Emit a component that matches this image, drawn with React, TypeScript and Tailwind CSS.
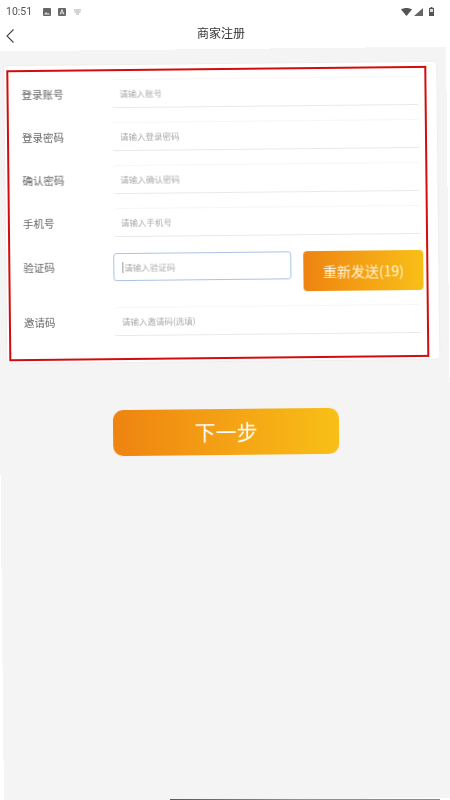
const FONT = "font-['Noto_Sans_CJK_SC','Noto_Sans',sans-serif]";

const FIELDS = [
  { label: '登录账号', hint: '请输入账号' },
  { label: '登录密码', hint: '请输入登录密码' },
  { label: '确认密码', hint: '请输入确认密码' },
  { label: '手机号', hint: '请输入手机号' },
];

function StatusBar() {
  return (
    <div className="flex h-[20px] items-center justify-between pl-[6px] pr-[16px] pt-[3px]">
      <div className="flex items-center gap-[11px]">
        <span className="font-['Roboto',sans-serif] text-[10.500px] text-[#555]">10:51</span>
        <div className="flex items-center gap-[7px]">
          {/* image notification */}
          <svg width="8" height="8" viewBox="0 0 8 8">
            <rect width="8" height="8" rx="1" fill="#666" />
            <path d="M1 6.500 3 4l1.500 1.500L5.500 5 7 6.500z" fill="#ddd" />
          </svg>
          <svg width="8" height="8" viewBox="0 0 8 8">
            <rect width="8" height="8" rx="1" fill="#666" />
            <path d="M2 6.500 4 1.500l2 5M3 5h2" fill="none" stroke="#eee" strokeWidth="0.9" />
          </svg>
          <svg width="9" height="6" viewBox="0 0 9 6">
            <path d="M1 1h7M1.500 3h6M3 5h3" stroke="#aaa" strokeWidth="1.100" />
          </svg>
        </div>
      </div>
      <div className="flex items-center gap-[2px]">
        <svg width="11" height="8" viewBox="0 0 11 8">
          <path d="M0 1.500C3-.5 8-.5 11 1.500L5.500 8z" fill="#555" />
        </svg>
        <svg width="9" height="8" viewBox="0 0 9 8">
          <path d="M9 0v8H0z" fill="#666" />
        </svg>
        <svg className="ml-[4px]" width="5" height="9" viewBox="0 0 5 9">
          <path d="M1.500 0h2v1H5v8H0V1h1.500z" fill="#555" />
          <rect x="1" y="2" width="3" height="3" fill="#ddd" />
        </svg>
      </div>
    </div>
  );
}

function Header() {
  return (
    <div className="relative flex h-[29px] items-center justify-center">
      <svg className="absolute left-[5px] top-[8px]" width="10" height="16" viewBox="0 0 10 16">
        <path d="M8.500 1.500 2 8l6.500 6.500" fill="none" stroke="#444" strokeWidth="1.100" />
      </svg>
      <span className="mb-[3px] mr-[8px] text-[12px] text-[#333]">商家注册</span>
    </div>
  );
}

function FieldRow({ label, hint }: { label: string; hint: string }) {
  return (
    <div className="flex h-[43px] items-center">
      <span className="w-[90px] shrink-0 text-[10.500px] text-[#666]">{label}</span>
      <div className="mr-[3px] flex h-[28px] flex-1 items-center rounded-[3px] border-b border-[#e9e9e9] pl-[8px] shadow-[0_-1px_1px_#f6f6f6]">
        <span className="text-[8.500px] text-[#aaa]">{hint}</span>
      </div>
    </div>
  );
}

export default function App() {
  return (
    <div className={`relative flex h-[800px] w-[450px] flex-col overflow-hidden bg-white ${FONT}`}>
      <div className="flex flex-1 flex-col blur-[0.35px]">
        <StatusBar />
        <Header />
        <div className="flex-1 -rotate-[0.6deg] bg-[#f4f4f4] pt-[15px]">
          <div className="ml-[8px] mr-[10px] rounded-[3px] bg-white pb-[2px] pt-[4px] shadow-[0_0_2px_#ddd]">
            <div className="ml-[2px] mr-[10px] border-2 border-[#d60a0a] pb-[15px] pl-[13px] pr-[2px] pt-[1px]">
              {FIELDS.map((f) => (
                <FieldRow key={f.label} label={f.label} hint={f.hint} />
              ))}
              <div className="mt-[9px] flex items-start">
                <span className="w-[90px] shrink-0 pt-[6px] text-[10.500px] text-[#666]">验证码</span>
                <div className="flex h-[28px] w-[178px] items-center rounded-[3px] border border-[#a9c2e4] pl-[8px]">
                  <span className="mr-[1px] h-[11px] w-px bg-[#999]" />
                  <span className="text-[8.500px] text-[#aaa]">请输入验证码</span>
                </div>
                <div className="ml-[12px] flex h-[40px] w-[120px] items-center justify-center rounded-[4px] bg-gradient-to-r from-[#ee8311] to-[#f8bf17] text-[14px] text-[#fff6e0]">
                  重新发送(19)
                </div>
              </div>
              <div className="mt-[7px]">
                <FieldRow label="邀请码" hint="请输入邀请码(选填)" />
              </div>
            </div>
          </div>
          <div className="ml-[113px] mt-[48px] flex h-[46px] w-[226px] items-center justify-center rounded-[10px] bg-gradient-to-r from-[#ee8311] to-[#f8bf17] text-[21px] text-white">
            下一步
          </div>
        </div>
      </div>
      {/* sliver of the next screen at the very bottom edge */}
      <div className="absolute bottom-0 left-[170px] h-px w-[270px] bg-gradient-to-r from-[#555a70] via-[#8a90a8] to-[#888]" />
    </div>
  );
}
